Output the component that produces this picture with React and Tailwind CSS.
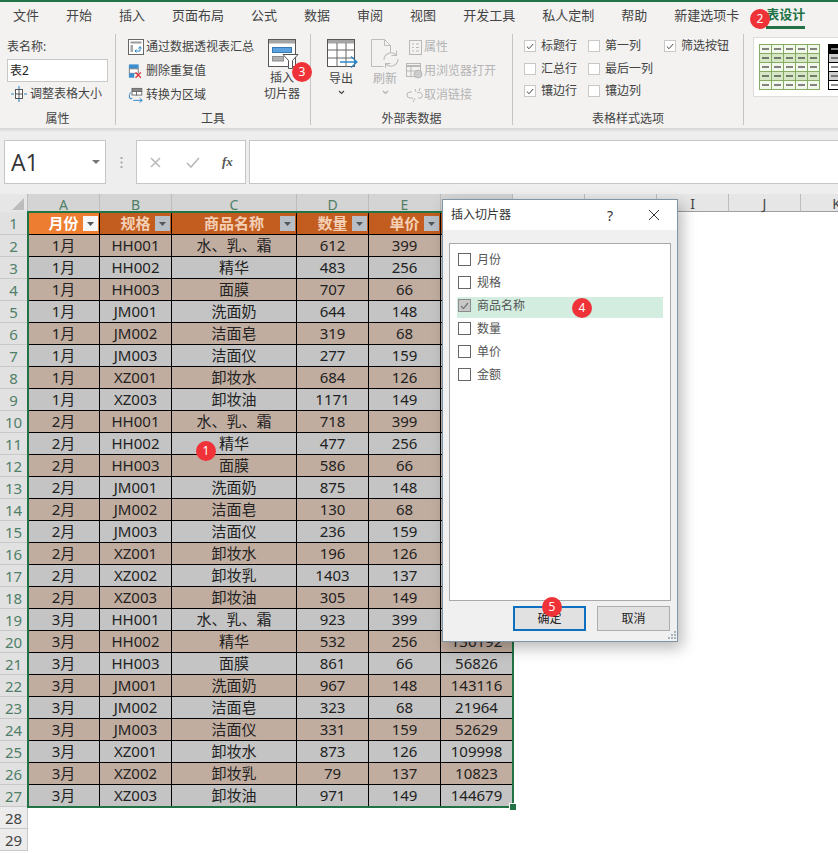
import React from "react";

const tabs = ["文件","开始","插入","页面布局","公式","数据","审阅","视图","开发工具","私人定制","帮助","新建选项卡"];
const base = [
["1月","HH001","水、乳、霜",612,399],["1月","HH002","精华",483,256],["1月","HH003","面膜",707,66],["1月","JM001","洗面奶",644,148],["1月","JM002","洁面皂",319,68],["1月","JM003","洁面仪",277,159],["1月","XZ001","卸妆水",684,126],["1月","XZ003","卸妆油",1171,149],
["2月","HH001","水、乳、霜",718,399],["2月","HH002","精华",477,256],["2月","HH003","面膜",586,66],["2月","JM001","洗面奶",875,148],["2月","JM002","洁面皂",130,68],["2月","JM003","洁面仪",236,159],["2月","XZ001","卸妆水",196,126],["2月","XZ002","卸妆乳",1403,137],["2月","XZ003","卸妆油",305,149],
["3月","HH001","水、乳、霜",923,399],["3月","HH002","精华",532,256],["3月","HH003","面膜",861,66],["3月","JM001","洗面奶",967,148],["3月","JM002","洁面皂",323,68],["3月","JM003","洁面仪",331,159],["3月","XZ001","卸妆水",873,126],["3月","XZ002","卸妆乳",79,137],["3月","XZ003","卸妆油",971,149]];
const colW = ["w-[72px]","w-[72px]","w-[125px]","w-[72px]","w-[72px]","w-[72px]"];

function Badge({ className, children }) {
  return <div className={"absolute z-30 w-[20px] h-[20px] rounded-full bg-[#ee3237] text-white text-[12px] leading-[20px] text-center " + className}>{children}</div>;
}
function Chevron({ c = "#444" }) {
  return <svg width="7" height="5" viewBox="0 0 7 5"><path d="M1 1l2.5 2.5L6 1" fill="none" stroke={c} strokeWidth="1.1" /></svg>;
}
function Group({ w, label, children, pl = "" }) {
  return (
    <div className={"flex flex-col shrink-0 " + w}>
      <div className={"flex-1 flex min-h-0 pt-[5px] " + pl}>{children}</div>
      <div className="h-[20px] text-center text-[12px] leading-[22px] text-[#444]">{label}</div>
    </div>
  );
}
const Sep = () => <div className="w-px h-[91px] mt-[4px] bg-[#c6c5c3] shrink-0" />;

function IconPivot() {
  return <svg width="16" height="17" viewBox="0 0 16 17"><rect x=".5" y=".5" width="15" height="15" fill="#fff" stroke="#666"/><rect x="2.5" y="2.5" width="11" height="2" fill="#999"/><rect x="2.5" y="6" width="2.5" height="7" fill="#a8a8a8"/><path d="M7 12h5V8M10.5 9.5L12 7.5l1.5 2M8.5 10.5L7 12l1.5 1.5" fill="none" stroke="#2e87c8" strokeWidth="1"/></svg>;
}
function IconDup() {
  return <svg width="18" height="17" viewBox="0 0 18 17"><rect x="1" y=".5" width="11" height="5" fill="#3b8ed0"/><rect x="1.5" y="5.5" width="10" height="5" fill="#fff" stroke="#777"/><rect x="1" y="10.5" width="6" height="5" fill="#3b8ed0"/><path d="M8.5 9.5l6 6M14.5 9.5l-6 6" stroke="#e0343a" strokeWidth="1.5"/></svg>;
}
function IconConv() {
  return <svg width="18" height="17" viewBox="0 0 18 17"><rect x="4.5" y=".5" width="11" height="3.5" fill="#888" stroke="#666"/><rect x="4.5" y="4" width="5" height="4" fill="#fff" stroke="#666"/><rect x="9.5" y="4" width="6" height="4" fill="#fff" stroke="#666"/><path d="M3 5C1 8 1 10 3 12M1 10.5l2 2 2-1M6 14h10M13 11.5l3 2.5-3 2.5" fill="none" stroke="#2e87c8" strokeWidth="1.1"/></svg>;
}
function IconResize() {
  return <svg width="18" height="16" viewBox="0 0 18 16"><rect x="5.5" y="3.5" width="7" height="9" fill="#fff" stroke="#555"/><path d="M5.5 8h7M9 3.5v9" stroke="#555"/><path d="M9 0v3M9 13v3M1 8h3M14 8h3" stroke="#2e87c8" strokeWidth="1.1"/></svg>;
}
function IconSlicer() {
  return <svg width="31" height="31" viewBox="0 0 31 31"><rect x=".5" y=".5" width="27" height="27" fill="#fff" stroke="#555"/><rect x="1" y="1" width="26" height="3.5" fill="#a5a5a5"/><rect x="4.5" y="8.5" width="19" height="5" fill="#5ba3e0" stroke="#3a78ad"/><rect x="4.5" y="17.5" width="11" height="4.5" fill="#b0b0b0" stroke="#8c8c8c"/><path d="M15 15.5h15l-5.5 6v8h-4v-8z" fill="#fff" stroke="#555"/></svg>;
}
function IconExport() {
  return <svg width="31" height="30" viewBox="0 0 31 30"><rect x=".5" y=".5" width="27" height="27" fill="#fff" stroke="#555"/><rect x="1" y="1" width="26" height="3.5" fill="#a5a5a5"/><path d="M1 11h26M1 19h26M10 4v24M19 4v24" stroke="#666"/><path d="M13 23h16M24 17.5l6 5.5-6 5.5" fill="none" stroke="#2e87c8" strokeWidth="1.3"/></svg>;
}
function IconRefresh() {
  return <svg width="29" height="30" viewBox="0 0 29 30" fill="none" stroke="#bdbdbd"><path d="M.5 27.5V.5h13l6 6v7M.5 27.5h12M13.5.5v6h6"/><path d="M13 21a7 7 0 0 1 12-5M27 20a7 7 0 0 1-12 5M25.5 11.5v5h-5M14.5 29v-4.5h5" strokeWidth="1.1"/></svg>;
}
function IconProp() {
  return <svg width="13" height="15" viewBox="0 0 13 15" fill="none" stroke="#b8b8b8"><rect x=".5" y=".5" width="12" height="14"/><path d="M3 4h2M7 4h3M3 7.5h2M7 7.5h3M3 11h2M7 11h3" /></svg>;
}
function IconBrowser() {
  return <svg width="17" height="16" viewBox="0 0 17 16" fill="none" stroke="#b8b8b8"><rect x=".5" y=".5" width="14" height="13"/><path d="M1 3h13" strokeWidth="2"/><path d="M.5 8h8M5 4v9"/><circle cx="12" cy="11" r="4" fill="#ccc"/></svg>;
}
function IconUnlink() {
  return <svg width="18" height="16" viewBox="0 0 18 16" fill="none" stroke="#b8b8b8"><path d="M6 5H4a3 3 0 0 0 0 6h3M11 6a3 3 0 0 1 4 0 3 3 0 0 1 0 5h-3M7 15l2-4M9 2l1 3M14 1l-1 3"/></svg>;
}
function Check({ on, label }) {
  return (
    <div className="flex items-center h-[22.5px]">
      <div className="w-[12px] h-[12px] bg-white border border-[#c8c8c8] flex items-center justify-center shrink-0">
        {on && <svg width="8" height="7" viewBox="0 0 8 7"><path d="M.8 3.5l2.2 2.2L7.2 1" fill="none" stroke="#444" strokeWidth="1"/></svg>}
      </div>
      <span className="ml-[5px] text-[12px] text-[#444] whitespace-nowrap">{label}</span>
    </div>
  );
}
function Thumb1() {
  const cells = [];
  for (let r = 0; r < 5; r++) for (let c = 0; c < 5; c++) cells.push(
    <g key={r + "-" + c}><rect x={c * 12 + .5} y={r * 9 + .5} width="12" height="9" fill={r % 2 ? "#d5e7c4" : "#f2f8ec"} stroke="#86ab63"/><path d={`M${c * 12 + 3} ${r * 9 + 5}h7`} stroke="#111" strokeWidth="1"/></g>);
  return <svg width="61" height="46" viewBox="0 0 61 46">{cells}</svg>;
}
function Thumb2() {
  const cells = [];
  for (let r = 0; r < 5; r++) {
    const fill = r === 0 ? "#000" : r % 2 === 1 ? "#cfcfcf" : "#fff";
    cells.push(<rect key={"b" + r} x=".5" y={r * 9 + .5} width="30" height="9" fill={fill} stroke="#000"/>);
    cells.push(<path key={"d" + r} d={`M3 ${r * 9 + 5}h7`} stroke={r === 0 ? "#fff" : "#222"}/>);
  }
  return <svg width="31" height="46" viewBox="0 0 31 46">{cells}</svg>;
}
function Filter({ first }) {
  return (
    <div className={"absolute right-[1px] top-[4px] w-[15px] h-[15px] flex items-center justify-center " + (first ? "bg-[#f4f6f8]" : "bg-[#b7bec6]")}>
      <svg width="7" height="4" viewBox="0 0 7 4"><path d="M0 0h7L3.5 4z" fill="#555"/></svg>
    </div>
  );
}
function HeaderCell({ i, text, first }) {
  return (
    <div className={colW[i] + " relative shrink-0 h-[23px] pt-px border-r border-b border-black flex items-center justify-center text-[15px] font-bold " + (first ? "bg-[#ed7d31] text-white" : "bg-[#c25d1f] text-[#f3cfb6]")}>
      {text}
      <Filter first={first} />
    </div>
  );
}
function RowNum({ n, sel, h = "h-[22px]" }) {
  return <div className={"w-[28px] shrink-0 " + h + " border-r border-b pt-px flex items-center justify-center text-[15px] " + (sel ? "bg-[#e1e1e1] border-[#c8c8c8] text-[#4f7f68]" : "bg-[#ececec] border-[#c8c8c8] text-[#444]")}>{n}</div>;
}
function ColHead({ t, w, sel }) {
  return <div className={w + " shrink-0 h-[18px] pt-[2px] border-r border-[#bdbdbd] flex items-center justify-center text-[14px] " + (sel ? "bg-[#d4d4d4] text-[#4f7f68]" : "bg-[#e6e6e6] border-b border-b-[#9f9f9f] text-[#444]")}>{t}</div>;
}

export default function App() {
  return (
    <div className="relative w-[838px] h-[853px] overflow-hidden bg-white flex flex-col font-['Noto_Sans','Noto_Sans_CJK_SC',sans-serif]">
      {/* tabs */}
      <div className="h-[30px] shrink-0 bg-[#f3f2f1] border-t-2 border-[#217346] flex items-start pl-[13px] gap-[27px] text-[13px] text-[#444]">
        {tabs.map(t => <div key={t} className="h-[28px] leading-[26px] whitespace-nowrap">{t}</div>)}
        <div className="h-[27px] leading-[25px] border-b-[3px] border-[#217346] font-bold text-[#217346] whitespace-nowrap">表设计</div>
      </div>

      {/* ribbon */}
      <div className="h-[98px] shrink-0 bg-[#f3f2f1] flex text-[12px] text-[#444]">
        <Group w="w-[115px]" label="属性" pl="pl-[7px]">
          <div className="flex flex-col w-[101px]">
            <div className="h-[23px] leading-[23px]">表名称:</div>
            <div className="h-[23px] mt-px bg-white border border-[#c8c8c8] text-[12px] leading-[21px] pl-[2px] text-[#222]">表2</div>
            <div className="h-[24px] flex items-center pl-[3px] gap-[2px]"><IconResize /><span>调整表格大小</span></div>
          </div>
        </Group>
        <Sep />
        <Group w="w-[194px]" label="工具" pl="pl-[12px]">
          <div className="w-[133px] flex flex-col shrink-0">
            <div className="h-[24px] flex items-center whitespace-nowrap gap-[2px]"><span className="w-[16px] flex"><IconPivot /></span>通过数据透视表汇总</div>
            <div className="h-[24px] flex items-center whitespace-nowrap gap-[2px]"><span className="w-[16px] flex"><IconDup /></span>删除重复值</div>
            <div className="h-[24px] flex items-center whitespace-nowrap gap-[2px]"><span className="w-[16px] flex"><IconConv /></span>转换为区域</div>
          </div>
          <div className="w-[42px] flex flex-col items-center pt-[4px]">
            <div className="pl-[3px] flex"><IconSlicer /></div>
            <div className="leading-[16px] text-center whitespace-nowrap">插入<br/>切片器</div>
          </div>
        </Group>
        <Sep />
        <Group w="w-[201px]" label="外部表数据" pl="pl-[9px]">
          <div className="w-[42px] flex flex-col items-center pt-[4px]">
            <div className="pl-[2px] flex"><IconExport /></div>
            <div className="leading-[16px] mt-[2px]">导出</div>
            <div className="mt-[3px] flex"><Chevron /></div>
          </div>
          <div className="w-[42px] ml-[2px] flex flex-col items-center pt-[4px] text-[#b0b0b0]">
            <div className="flex"><IconRefresh /></div>
            <div className="leading-[16px] mt-[2px]">刷新</div>
            <div className="mt-[3px] flex"><Chevron c="#b0b0b0" /></div>
          </div>
          <div className="flex flex-col text-[#b4b4b4]">
            <div className="h-[24px] flex items-center whitespace-nowrap"><span className="w-[18px] flex justify-center"><IconProp /></span>属性</div>
            <div className="h-[24px] flex items-center whitespace-nowrap"><span className="w-[18px] flex"><IconBrowser /></span>用浏览器打开</div>
            <div className="h-[24px] flex items-center whitespace-nowrap"><span className="w-[18px] flex"><IconUnlink /></span>取消链接</div>
          </div>
        </Group>
        <Sep />
        <Group w="w-[230px]" label="表格样式选项" pl="pl-[11px]">
          <div className="grid grid-cols-[64px_76px_auto] content-start">
            <Check on label="标题行" /><Check label="第一列" /><Check on label="筛选按钮" />
            <Check label="汇总行" /><Check label="最后一列" /><div />
            <Check on label="镶边行" /><Check label="镶边列" /><div />
          </div>
        </Group>
        <Sep />
        <div className="ml-[9px] mt-[7px] h-[60px] flex-1 bg-white border border-r-0 border-[#dcdcdc] flex items-start pt-[6px] pl-[5px] gap-[8px]">
          <Thumb1 /><Thumb2 />
        </div>
      </div>
      <div className="h-[4px] shrink-0 bg-gradient-to-b from-[#d6d6d6] to-[#ececec]" />

      {/* formula bar */}
      <div className="h-[62px] shrink-0 bg-[#eeeeee] flex pt-[8px] pl-[4px]">
        <div className="w-[102px] h-[44px] bg-white border border-[#c6c6c6] flex items-center justify-between pl-[6px] pr-[5px]">
          <span className="text-[23px] text-[#333] font-['Open_Sans',sans-serif]">A1</span>
          <svg width="8" height="4" viewBox="0 0 8 4"><path d="M0 0h8L4 4z" fill="#777"/></svg>
        </div>
        <div className="w-[30px] h-[44px] flex items-center justify-center">
          <svg width="3" height="11" viewBox="0 0 3 11"><path d="M1.5 0v2M1.5 4.5v2M1.5 9v2" stroke="#aaa" strokeWidth="2"/></svg>
        </div>
        <div className="w-[110px] h-[44px] bg-white border border-[#c6c6c6] flex items-center pl-[13px] gap-[25px]">
          <svg width="11" height="11" viewBox="0 0 11 11"><path d="M1 1l9 9M10 1l-9 9" stroke="#b8b8b8" strokeWidth="1.5"/></svg>
          <svg width="14" height="11" viewBox="0 0 14 11"><path d="M1 6l4 4 8-9" fill="none" stroke="#b8b8b8" strokeWidth="1.6"/></svg>
          <span className="font-['Liberation_Serif',serif] italic font-bold text-[13px] text-[#555] -ml-[3px]">fx</span>
        </div>
        <div className="flex-1 ml-[3px] h-[44px] bg-white border-y border-l border-[#c6c6c6]" />
      </div>

      {/* column headers */}
      <div className="h-[18px] shrink-0 flex">
        <div className="w-[28px] h-[18px] bg-[#e6e6e6] border-r border-[#bdbdbd] flex items-end justify-end pr-[3px] pb-[2px] shrink-0">
          <svg width="12" height="12" viewBox="0 0 12 12"><path d="M12 0v12H0z" fill="#bcbcbc"/></svg>
        </div>
        <ColHead t="A" w="w-[72px]" sel /><ColHead t="B" w="w-[72px]" sel /><ColHead t="C" w="w-[125px]" sel /><ColHead t="D" w="w-[72px]" sel /><ColHead t="E" w="w-[72px]" sel /><ColHead t="F" w="w-[72px]" sel />
        <ColHead t="G" w="w-[72px]" /><ColHead t="H" w="w-[72px]" /><ColHead t="I" w="w-[72px]" /><ColHead t="J" w="w-[72px]" /><ColHead t="K" w="w-[72px]" />
      </div>

      {/* sheet */}
      <div className="relative flex-1 min-h-0 text-[#222] text-[15px]">
        <div className="flex">
          <RowNum n={1} sel h="h-[23px]" />
          {["月份","规格","商品名称","数量","单价","金额"].map((t, i) => <HeaderCell key={t} i={i} text={t} first={i === 0} />)}
        </div>
        {base.map((r, idx) => {
          const bg = idx % 2 === 0 ? "bg-[#c1ada0]" : "bg-[#c4c4c4]";
          const vals = [r[0], r[1], r[2], r[3], r[4], r[3] * r[4]];
          return (
            <div key={idx} className="flex">
              <RowNum n={idx + 2} sel />
              {vals.map((v, i) => <div key={i} className={colW[i] + " shrink-0 h-[22px] border-r border-b border-black flex items-center justify-center " + bg}>{v}</div>)}
            </div>
          );
        })}
        <RowNum n={28} />
        <RowNum n={29} />

        {/* selection */}
        <div className="absolute left-[27px] -top-px w-[487px] h-[597px] border-2 border-[#217346] pointer-events-none">
          <div className="absolute -right-[5px] -bottom-[5px] w-[8px] h-[8px] bg-[#217346] border border-white" />
        </div>
      </div>

      {/* dialog */}
      <div className="absolute z-20 left-[442px] top-[199px] w-[236px] h-[443px] bg-[#f0f0f0] border border-[#7f95a6] shadow-[4px_6px_14px_rgba(0,0,0,0.28)] flex flex-col text-[12px]">
        <div className="h-[30px] shrink-0 bg-white flex items-center pl-[8px] text-[#333]">
          <span className="flex-1">插入切片器</span>
          <span className="text-[14px] w-[16px] text-center mr-[30px]">?</span>
          <svg className="mr-[17px]" width="12" height="12" viewBox="0 0 12 12"><path d="M1 1l10 10M11 1L1 11" stroke="#333" strokeWidth="1"/></svg>
        </div>
        <div className="mx-[6px] mt-[13px] h-[358px] bg-white border border-[#a9a9a9] px-[8px] pt-[4px] text-[#555]">
          {["月份","规格","商品名称","数量","单价","金额"].map((t, i) => (
            <div key={t} className="relative h-[23px] flex items-center">
              {i === 2 && <div className="absolute -left-px -right-px top-[3px] h-[21px] bg-[#d3eee0]" />}
              <div className={"relative w-[13px] h-[13px] border flex items-center justify-center " + (i === 2 ? "bg-[#c8c8c8] border-[#8c8c8c]" : "bg-white border-[#666]")}>
                {i === 2 && <svg width="9" height="8" viewBox="0 0 9 8"><path d="M1 4l2.5 2.5L8 1" fill="none" stroke="#777" strokeWidth="1.3"/></svg>}
              </div>
              <span className="relative ml-[6px]">{t}</span>
            </div>
          ))}
        </div>
        <div className="flex justify-end mt-[5px] mr-[7px] gap-[11px] text-[#222]">
          <div className="w-[73px] h-[25px] bg-[#e1e1e1] border-2 border-[#0d6fbd] flex items-center justify-center">确定</div>
          <div className="w-[73px] h-[25px] bg-[#e1e1e1] border border-[#adadad] flex items-center justify-center">取消</div>
        </div>
        <svg className="absolute right-[1px] bottom-[1px]" width="9" height="9" viewBox="0 0 9 9"><path d="M7 0h2v2H7zM4 3h2v2H4zM7 3h2v2H7zM1 6h2v2H1zM4 6h2v2H4zM7 6h2v2H7z" fill="#a8b4bc"/></svg>
      </div>

      <Badge className="left-[196px] top-[441px]">1</Badge>
      <Badge className="left-[750px] top-[9px]">2</Badge>
      <Badge className="left-[292px] top-[62px]">3</Badge>
      <Badge className="left-[572px] top-[298px]">4</Badge>
      <Badge className="left-[542px] top-[597px]">5</Badge>
    </div>
  );
}
